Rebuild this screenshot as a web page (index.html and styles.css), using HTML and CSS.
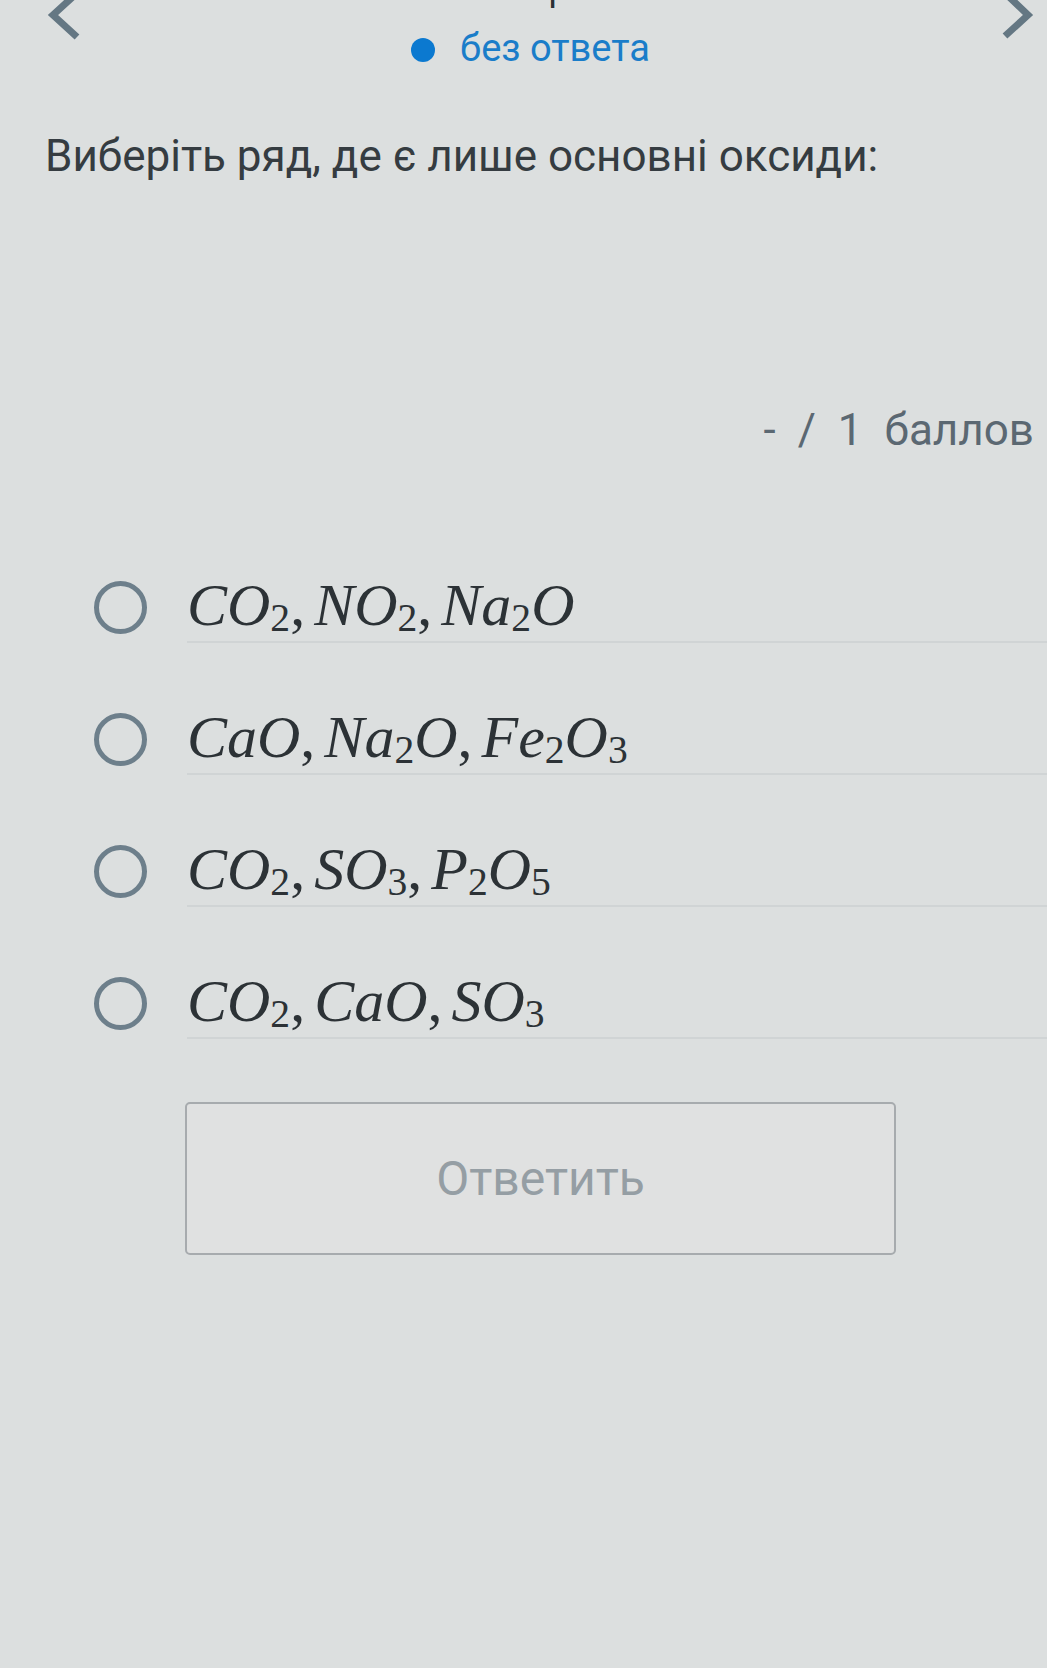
FILE: index.html
```html
<!DOCTYPE html>
<html lang="uk">
<head>
<meta charset="utf-8">
<title>Тест</title>
<link rel="stylesheet" href="styles.css">
</head>
<body>
<div class="page">
  <header class="header">
    <svg class="chev chev-left" width="40" height="52" viewBox="0 0 40 52"><polyline points="32,3 8,25 32,47" fill="none" stroke="#647783" stroke-width="7"/></svg>
    <div class="head-mid">
      <div class="title">Вопрос</div>
      <div class="status"><span class="dot"></span><span>без ответа</span></div>
    </div>
    <svg class="chev chev-right" width="40" height="52" viewBox="0 0 40 52"><polyline points="9,3 32,25 9,46" fill="none" stroke="#647783" stroke-width="7"/></svg>
  </header>

  <h1 class="question">Виберіть ряд, де є лише основні оксиди:</h1>

  <div class="score"><span>-</span><span>/</span><span>1</span><span>баллов</span></div>

  <ul class="options">
    <li class="option"><span class="radio"></span><span class="label"><i>CO</i><sub>2</sub><span class="c">,</span><i>NO</i><sub>2</sub><span class="c">,</span><i>Na</i><sub>2</sub><i>O</i></span></li>
    <li class="option"><span class="radio"></span><span class="label"><i>CaO</i><span class="c">,</span><i>Na</i><sub>2</sub><i>O</i><span class="c">,</span><i>Fe</i><sub>2</sub><i>O</i><sub>3</sub></span></li>
    <li class="option"><span class="radio"></span><span class="label"><i>CO</i><sub>2</sub><span class="c">,</span><i>SO</i><sub>3</sub><span class="c">,</span><i>P</i><sub>2</sub><i>O</i><sub>5</sub></span></li>
    <li class="option"><span class="radio"></span><span class="label"><i>CO</i><sub>2</sub><span class="c">,</span><i>CaO</i><span class="c">,</span><i>SO</i><sub>3</sub></span></li>
  </ul>

  <button class="answer" type="button">Ответить</button>
</div>
</body>
</html>
```

FILE: styles.css
```css
html, body {
  margin: 0;
  padding: 0;
  background: #dcdfdf;
}
body {
  font-family: Roboto, "Noto Sans", Arial, sans-serif;
  width: 1047px;
  height: 1668px;
  overflow: hidden;
}
.page {
  display: flex;
  flex-direction: column;
}
.header {
  display: grid;
  grid-template-columns: auto 1fr auto;
  padding: 0 11px 0 45px;
}
.chev {
  display: block;
  margin-top: -10px;
}
.head-mid {
  display: flex;
  flex-direction: column;
  align-items: center;
}
.title {
  margin-top: -30px;
  margin-left: 12px;
  font-size: 36px;
  line-height: 36px;
  color: #2b3135;
}
.status {
  margin-top: 20px;
  margin-right: 20px;
  display: flex;
  align-items: center;
  gap: 25px;
  font-size: 38px;
  line-height: 44px;
  color: #1a7dc9;
}
.dot {
  width: 24px;
  height: 24px;
  border-radius: 50%;
  background: #0b79d0;
  margin-top: 4px;
}
.question {
  margin: 60px 0 0 45px;
  font-weight: 400;
  font-size: 44px;
  line-height: 52px;
  color: #353c41;
}
.score {
  margin-top: 222px;
  align-self: flex-end;
  padding-right: 13px;
  display: flex;
  gap: 22px;
  font-size: 44px;
  line-height: 52px;
  color: #5b6872;
}
.options {
  list-style: none;
  margin: 116px 0 0;
  padding: 0 0 0 94px;
  display: flex;
  flex-direction: column;
  gap: 61px;
}
.option {
  display: flex;
  align-items: center;
  gap: 40px;
}
.radio {
  flex: none;
  width: 53px;
  height: 53px;
  box-sizing: border-box;
  border: 5px solid #6d7f8b;
  border-radius: 50%;
}
.label {
  flex: 1;
  font-family: "Liberation Serif", "DejaVu Serif", serif;
  font-size: 60px;
  line-height: 66px;
  padding-bottom: 3px;
  border-bottom: 2px solid #d0d4d5;
  color: #2c3236;
  white-space: nowrap;
}
.label i {
  font-style: italic;
}
.label sub {
  font-size: 0.66em;
  line-height: 0;
  vertical-align: -0.15em;
  font-style: normal;
}
.label .c {
  margin-right: 0.15em;
}
.answer {
  margin: 63px 0 0 185px;
  width: 711px;
  height: 153px;
  box-sizing: border-box;
  background: #e0e1e1;
  border: 2px solid #a7abae;
  border-radius: 5px;
  font-family: Roboto, "Noto Sans", Arial, sans-serif;
  font-size: 48px;
  color: #959ea4;
  padding: 0;
}
```
